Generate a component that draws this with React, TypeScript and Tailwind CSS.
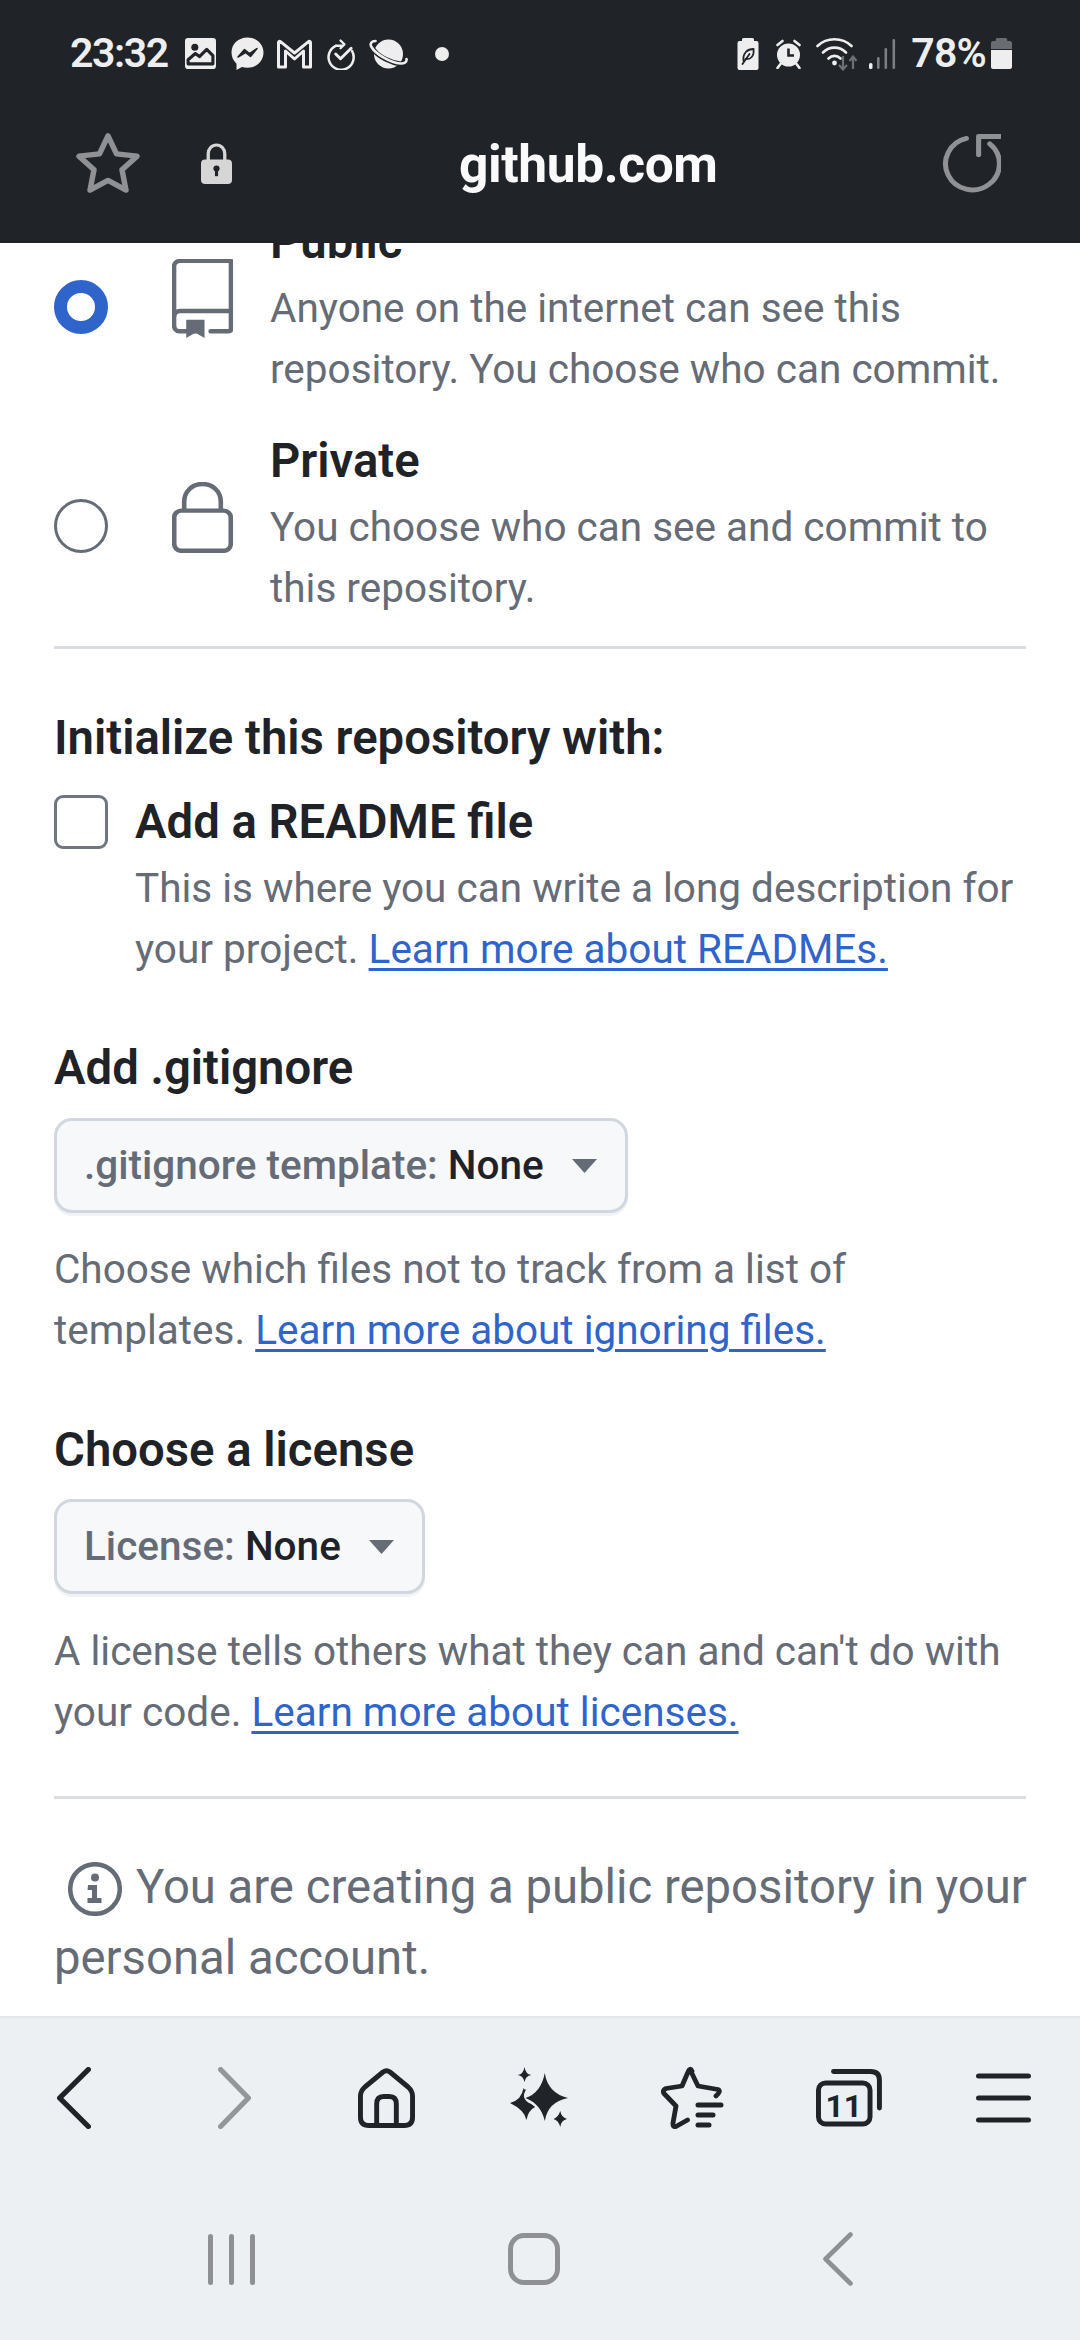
const Link = ({ children }: { children: React.ReactNode }) => (
  <a className="text-[#2f65cb] underline underline-offset-[5px] decoration-[3px]">{children}</a>
);

function StatusLeftIcons() {
  return (
    <>
      <svg className="ml-[17px]" width="31" height="31" viewBox="0 0 30 30">
        <rect width="30" height="30" rx="3" fill="#eee" />
        <circle cx="9.5" cy="9" r="3.4" fill="#202328" />
        <path d="M3 25 L3 21 L10 15 L14 18 L21 11 L27 17 L27 25 Z" fill="none" stroke="#202328" strokeWidth="3" strokeLinejoin="round" />
      </svg>
      <svg className="ml-[15px]" width="33" height="34" viewBox="0 0 33 34">
        <path d="M16.5 0.5C7.4 0.5 0.5 7 0.5 15.6c0 4.5 1.9 8.4 5 11.1V33l5.4-3c1.7.5 3.6.8 5.6.8 9.1 0 16-6.6 16-15.2S25.600.5 16.5.5Z" fill="#eee" />
        <path d="M7 20 L13.500 12.500 L18.500 16.500 L26 11.500 L19.500 19.500 L14.500 15.500 Z" fill="#202328" stroke="#202328" strokeWidth="1.500" strokeLinejoin="round" />
      </svg>
      <svg className="ml-[12px]" width="37" height="30" viewBox="0 0 36 30">
        <path d="M2 28V3.500C2 2.500 3.200 2 4 2.700L18 14 32 2.700C32.800 2 34 2.500 34 3.500V28H27V12L18 20 9 12V28Z" fill="none" stroke="#eee" strokeWidth="3" strokeLinejoin="round" />
      </svg>
      <svg className="ml-[14px]" width="29" height="32" viewBox="0 0 30 32">
        <path d="M9 6.500A13 13 0 1 0 26 12" fill="none" stroke="#eee" strokeWidth="2.600" strokeLinecap="round" transform="translate(0 1)" />
        <path d="M15 7.500H9.500M14 2 L18 6 L14 10" fill="none" stroke="#eee" strokeWidth="2.400" strokeLinecap="round" strokeLinejoin="round" />
        <path d="M9 16 L14 21 L25 10" fill="none" stroke="#eee" strokeWidth="3" strokeLinecap="round" strokeLinejoin="round" />
      </svg>
      <svg className="ml-[13px]" width="39" height="32" viewBox="0 0 38 32">
        <circle cx="19" cy="16" r="14.500" fill="#eee" />
        <path d="M3 4.500C0.500 5 1 9 5 13 10 19 22 25 31 26 35 26.500 37.500 25 36.500 22" fill="none" stroke="#202328" strokeWidth="5" />
        <path d="M6 3C2 3 0 5.500 2 9 6 16 21 25 31 25.500 35 25.700 37.500 24 37 21" fill="none" stroke="#eee" strokeWidth="2.600" strokeLinecap="round" />
      </svg>
      <div className="ml-[27px] size-[14px] rounded-full bg-[#eee]" />
    </>
  );
}

function StatusRightIcons() {
  return (
    <>
      <svg width="22" height="32" viewBox="0 0 21 32">
        <path d="M6 0h9a1.500 1.500 0 0 1 1.500 1.500V3H19a2 2 0 0 1 2 2v25a2 2 0 0 1-2 2H2a2 2 0 0 1-2-2V5a2 2 0 0 1 2-2h2.500V1.500A1.500 1.500 0 0 1 6 0Z" fill="#eee" />
        <path d="M6 23C5 15 10 11 16 11c1 7-3 11-8 10M5 26 L12 16" fill="none" stroke="#202328" strokeWidth="1.800" strokeLinecap="round" />
      </svg>
      <svg className="ml-[15px]" width="29" height="30" viewBox="0 0 28 30">
        <circle cx="14" cy="16" r="11.500" fill="#eee" />
        <path d="M3 6 L8 2M25 6 L20 2M6 25 L3 29M22 25 L25 29" stroke="#eee" strokeWidth="2.600" strokeLinecap="round" />
        <path d="M14 9.500V16.500H19.500" fill="none" stroke="#202328" strokeWidth="2.600" />
      </svg>
      <svg className="ml-[13px]" width="43" height="34" viewBox="0 0 43 34">
        <path d="M1.500 9C11 0 26 0 35.500 9M7 15.500C13.500 9 23.500 9 30 15.500M12.500 21.500C16 18 21 18 24.500 21.500" fill="none" stroke="#eee" strokeWidth="2.600" strokeLinecap="round" />
        <circle cx="18.500" cy="26" r="2.400" fill="#eee" />
        <path d="M27 19V32M23 28 L27 32.500 L31 28" fill="none" stroke="#6d7074" strokeWidth="2.200" />
        <path d="M37 32V20M33.500 24 L37 19.500 L40.500 24" fill="none" stroke="#6d7074" strokeWidth="2.200" />
      </svg>
      <svg className="ml-[10px]" width="27" height="30" viewBox="0 0 27 30">
        <rect x="0" y="24" width="3.500" height="6" rx="1.500" fill="#eee" />
        <rect x="8" y="18" width="2.600" height="12" rx="1.300" fill="#7b7e82" />
        <rect x="15.500" y="9" width="2.600" height="21" rx="1.300" fill="#7b7e82" />
        <rect x="23.500" y="0" width="2.600" height="30" rx="1.300" fill="#7b7e82" />
      </svg>
      <span className="ml-[15px] text-[41px] leading-none font-semibold text-[#eee] tracking-[-0.8px]">78%</span>
      <svg className="ml-[5px]" width="21" height="31" viewBox="0 0 20 31" preserveAspectRatio="none">
        <path d="M6 0h8a1.500 1.500 0 0 1 1.500 1.500V3H18a2 2 0 0 1 2 2v6H0V5a2 2 0 0 1 2-2h2.500V1.500A1.500 1.500 0 0 1 6 0Z" fill="#696c70" />
        <path d="M0 12h20v17a2 2 0 0 1-2 2H2a2 2 0 0 1-2-2Z" fill="#eee" />
      </svg>
    </>
  );
}

function RepoIcon() {
  return (
    <svg className="shrink-0 mb-[17px]" width="61" height="79" viewBox="0 0 60 82" preserveAspectRatio="none">
      <path d="M24 75H7C4 75 2 72 2 68.500V8C2 4.500 4.500 2 8 2H58V72.500C58 74 57 75 55.500 75H38" fill="none" stroke="#656c76" strokeWidth="4.500" strokeLinecap="round" strokeLinejoin="round" />
      <path d="M2 60C2 56 4.500 54 8 54H58" fill="none" stroke="#656c76" strokeWidth="4.500" />
      <path d="M14 63H32V82L23 76.500 14 82Z" fill="#656c76" />
    </svg>
  );
}

function LockIcon() {
  return (
    <svg className="shrink-0 mb-[18px]" width="61" height="71" viewBox="0 0 60 72" preserveAspectRatio="none">
      <path d="M12 29V20C12 9.500 20 2 30 2S48 9.500 48 20V29" fill="none" stroke="#656c76" strokeWidth="4.500" />
      <rect x="2.200" y="29" width="55.600" height="40.800" rx="7" fill="none" stroke="#656c76" strokeWidth="4.500" />
    </svg>
  );
}

function Caret() {
  return (
    <svg className="shrink-0" width="25" height="14" viewBox="0 0 25 14">
      <path d="M0 0H25L12.500 14Z" fill="#656c76" />
    </svg>
  );
}

function Select({ label }: { label: string }) {
  return (
    <div className="w-fit h-[95px] flex items-center gap-[28px] pl-[27px] pr-[28px] rounded-[18px] border-[3px] border-[#d0d7de] bg-[#f6f8fa] shadow-[0_3px_0_#f1f3f5] text-[40.5px] text-[#656c76] font-medium">
      <span>
        {label} <span className="text-[#1f2328]">None</span>
      </span>
      <Caret />
    </div>
  );
}

function BottomNav() {
  return (
    <div className="flex items-center h-[64px] text-[#202328]">
      <svg className="ml-[57px]" width="34" height="62" viewBox="0 0 32 62" fill="none" stroke="#202328" strokeWidth="5" strokeLinecap="round" strokeLinejoin="round" preserveAspectRatio="none">
        <path d="M29.500 2.500 L2.500 31 L29.500 59.500" />
      </svg>
      <svg className="ml-[127px]" width="33" height="62" viewBox="0 0 32 62" fill="none" stroke="#949699" strokeWidth="5" strokeLinecap="round" strokeLinejoin="round" preserveAspectRatio="none">
        <path d="M2.500 2.500 L29.500 31 L2.500 59.500" />
      </svg>
      <svg className="ml-[107px]" width="57" height="60" viewBox="0 0 58 60" fill="none" stroke="#202328" strokeWidth="5" strokeLinejoin="round" preserveAspectRatio="none">
        <path d="M25.500 4 Q29 1.500 32.500 4 L51 19 Q55.500 23 55.500 28 V49 Q55.500 57.500 47 57.500 H11 Q2.500 57.500 2.500 49 V28 Q2.500 23 7 19 Z" />
        <path d="M19 57.500 V36 Q19 28.500 26 28.500 H32 Q39 28.500 39 36 V57.500" />
      </svg>
      <svg className="ml-[95px]" width="58" height="62" viewBox="0 0 60 62" fill="#202328" preserveAspectRatio="none">
        <path d="M15 0 Q16 7 22 8 Q16 9 15 15 Q14 9 8 8 Q14 7 15 0Z" />
        <path d="M14 21 Q15 24 17 22 Q10 32 22 37 L26 40 Q19 43 17 53 Q15 43 0 36 Q12 33 14 21Z" />
        <path d="M36 6 Q39 26 60 31 Q39 35 36 54 Q32 37 16 31 Q32 26 36 6Z" />
        <path d="M52 44 Q53 50 59 52 Q53 53 52 60 Q50 53 45 52 Q50 50 52 44Z" />
      </svg>
      <svg className="ml-[93px]" width="64" height="64" viewBox="0 0 64 64" fill="none" stroke="#202328" strokeWidth="4.800" strokeLinecap="round" strokeLinejoin="round">
        <path d="M29 3.500 L37 20 L57 23.500 Q60.500 25 55 30 M26.500 54 L15 60.500 Q11.500 61.500 12 57 L15 40 L3 27.500 Q1 24.500 5 22.500 L21 20 L27 6 Q29 1 31 5" />
        <path d="M37 39H60M37 49H52M37 59H48" strokeWidth="5" />
      </svg>
      <svg className="ml-[91px]" width="66" height="58" viewBox="0 0 64 58" fill="none" stroke="#202328" strokeWidth="4.800" strokeLinecap="round" preserveAspectRatio="none">
        <rect x="2.400" y="14" width="50" height="41" rx="7" />
        <path d="M17 2.500H53Q61.500 2.500 61.500 11V39" />
        <text x="27" y="48" textAnchor="middle" fontSize="31" fontWeight="700" fontFamily="Roboto, sans-serif" fill="#202328" stroke="none">11</text>
      </svg>
      <svg className="ml-[94px]" width="55" height="50" viewBox="0 0 51 50" fill="none" stroke="#202328" strokeWidth="5" strokeLinecap="round" preserveAspectRatio="none">
        <path d="M2.500 3H48.500M2.500 25H48.500M2.500 47H48.500" />
      </svg>
    </div>
  );
}

function SystemNav() {
  return (
    <div className="flex items-center h-[54px] mt-[102px]">
      <div className="ml-[208px] flex gap-[16px]">
        <div className="w-[5px] h-[51px] rounded-full bg-[#8e9093]" />
        <div className="w-[5px] h-[51px] rounded-full bg-[#8e9093]" />
        <div className="w-[5px] h-[51px] rounded-full bg-[#8e9093]" />
      </div>
      <div className="ml-[253px] w-[52px] h-[52px] rounded-[16px] border-[5px] border-[#8e9093]" />
      <svg className="ml-[263px]" width="30" height="54" viewBox="0 0 30 54" fill="none" stroke="#8e9093" strokeWidth="4.600" strokeLinecap="round" strokeLinejoin="round">
        <path d="M27.500 2.500 L2.500 27 L27.500 51.500" />
      </svg>
    </div>
  );
}

export default function App() {
  return (
    <div className="w-[1080px] h-[2340px] flex flex-col overflow-hidden bg-white font-['Roboto',sans-serif]">
      <header className="shrink-0 h-[243px] bg-[#202328]">
        <div className="flex items-center h-[107px] pl-[70px] pr-[68px] justify-between">
          <div className="flex items-center">
            <span className="text-[41px] leading-none font-semibold text-[#eee] tracking-[-1.4px]">23:32</span>
            <StatusLeftIcons />
          </div>
          <div className="flex items-center">
            <StatusRightIcons />
          </div>
        </div>
        <div className="flex items-center h-[112px] pl-[76px] pr-[79px]">
          <svg width="64" height="62" viewBox="0 0 64 64" fill="none" stroke="#8f9194" strokeWidth="5.500" strokeLinejoin="round" preserveAspectRatio="none">
            <path d="M32 4 L40.500 22.500 L61 25 L46 39 L50 60 L32 50 L14 60 L18 39 L3 25 L23.500 22.500 Z" />
          </svg>
          <svg className="ml-[61px]" width="31" height="41" viewBox="0 0 30 42" preserveAspectRatio="none">
            <path d="M7 18V11C7 6 10.500 2 15 2S23 6 23 11V18" fill="none" stroke="#d6d6d6" strokeWidth="3.200" />
            <rect y="17" width="30" height="25" rx="4" fill="#d6d6d6" />
            <circle cx="15" cy="26" r="3" fill="#202328" />
            <rect x="13.500" y="26" width="3" height="8" fill="#202328" />
          </svg>
          <span className="ml-[227px] pt-[3px] text-[51.5px] font-bold text-[#fafafa] tracking-[-0.4px]">github.com</span>
          <svg className="ml-auto" width="59" height="59" viewBox="0 0 58 60" fill="none" stroke="#8f9194" strokeWidth="5" strokeLinecap="round" strokeLinejoin="round" preserveAspectRatio="none">
            <path d="M24 4.500 A26.500 26.500 0 1 0 47 10" />
            <path d="M57 2.500 H36 V21" />
          </svg>
        </div>
      </header>

      <main className="flex-1 min-h-0 overflow-hidden px-[54px]">
        <div className="-mt-[28px]">
          <div className="flex items-center">
            <div className="w-[54px] h-[54px] shrink-0 rounded-full border-[13px] border-[#2f65cb] bg-white" />
            <div className="ml-[64px] flex"><RepoIcon /></div>
            <div className="ml-[37px] text-[#656c76] text-[40.5px] leading-[60.500px]">
              <div className="text-[47.25px] leading-[54px] font-semibold text-[#1f2328]">Public</div>
              <div className="mt-[9px]">Anyone on the internet can see this</div>
              <div>repository. You choose who can commit.</div>
            </div>
          </div>
          <div className="flex items-center mt-[35px]">
            <div className="w-[54px] h-[54px] shrink-0 rounded-full border-[3px] border-[#656c76] bg-white" />
            <div className="ml-[64px] flex"><LockIcon /></div>
            <div className="ml-[37px] text-[#656c76] text-[40.5px] leading-[60.500px]">
              <div className="text-[47.25px] leading-[54px] font-semibold text-[#1f2328]">Private</div>
              <div className="mt-[9px]">You choose who can see and commit to</div>
              <div>this repository.</div>
            </div>
          </div>
          <div className="h-[3px] bg-[#d8dee4] mt-[28px]" />

          <h3 className="mt-[62px] text-[47.25px] leading-[54px] font-semibold text-[#1f2328]">Initialize this repository with:</h3>
          <div className="flex mt-[30px]">
            <div className="w-[54px] h-[54px] shrink-0 rounded-[9px] border-[3px] border-[#6e7781] bg-white" />
            <div className="ml-[27px] text-[#656c76] text-[40.5px] leading-[61px]">
              <div className="text-[47.25px] leading-[54px] font-semibold text-[#1f2328]">Add a README file</div>
              <div className="mt-[9px]">This is where you can write a long description for</div>
              <div>your project. <Link>Learn more about READMEs.</Link></div>
            </div>
          </div>

          <h3 className="mt-[61px] text-[47.25px] leading-[54px] font-semibold text-[#1f2328]">Add .gitignore</h3>
          <div className="mt-[23px]"><Select label=".gitignore template:" /></div>
          <p className="mt-[26px] text-[#656c76] text-[40.5px] leading-[61px]">
            Choose which files not to track from a list of
            <br />
            templates. <Link>Learn more about ignoring files.</Link>
          </p>

          <h3 className="mt-[62px] text-[47.25px] leading-[54px] font-semibold text-[#1f2328]">Choose a license</h3>
          <div className="mt-[22px]"><Select label="License:" /></div>
          <p className="mt-[27px] text-[#656c76] text-[40.5px] leading-[60.500px]">
            A license tells others what they can and can't do with
            <br />
            your code. <Link>Learn more about licenses.</Link>
          </p>

          <div className="h-[3px] bg-[#d8dee4] mt-[54px]" />
          <p className="mt-[53px] text-[#656c76] text-[47.25px] leading-[71px] whitespace-nowrap">
            <svg className="inline-block align-[-13px] ml-[14px] mr-[14px]" width="54" height="54" viewBox="0 0 54 54" fill="#656c76">
              <circle cx="27" cy="27" r="24.800" fill="none" stroke="#656c76" strokeWidth="4.500" />
              <circle cx="27" cy="15.500" r="4" />
              <path d="M20 23h9v13h4.500v5h-14v-5h4.500v-8h-4.500Z" />
            </svg>
            You are creating a public repository in your
            <br />
            personal account.
          </p>
        </div>
      </main>

      <footer className="shrink-0 h-[324px] bg-[#edf0f3] border-t-[2px] border-[#e4e6e8] pt-[48px]">
        <BottomNav />
        <SystemNav />
      </footer>
    </div>
  );
}
